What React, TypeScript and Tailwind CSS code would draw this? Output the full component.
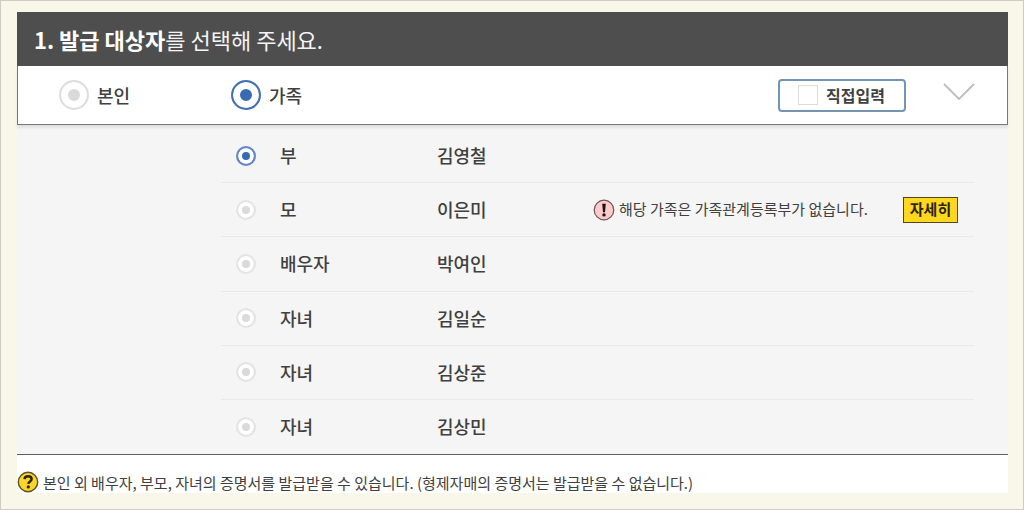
import { useState } from "react";

const family = [
  { relation: "부", name: "김영철" },
  { relation: "모", name: "이은미", missing: true },
  { relation: "배우자", name: "박여인" },
  { relation: "자녀", name: "김일순" },
  { relation: "자녀", name: "김상준" },
  { relation: "자녀", name: "김상민" },
];

function WarningIcon() {
  return (
    <svg width="22" height="22" viewBox="0 0 22 22" aria-hidden="true" className="shrink-0">
      <circle cx="11" cy="11" r="9.8" fill="#fccaca" stroke="#6b5555" strokeWidth="1.2" />
      <path d="M9.2 4.800h3.600l-.8 8.400h-2z" fill="#1d1212" />
      <circle cx="11" cy="15.900" r="1.700" fill="#1d1212" />
    </svg>
  );
}

function HelpIcon() {
  return (
    <svg width="22" height="22" viewBox="0 0 22 22" aria-hidden="true" className="shrink-0">
      <circle cx="11" cy="11" r="9.7" fill="#fbd527" stroke="#5c512a" strokeWidth="1.4" />
      <path
        d="M7.500 8.100c.2-2 1.700-2.900 3.500-2.900 2.100 0 3.600 1 3.600 2.800 0 2.400-3.200 2.400-3.200 4.900"
        fill="none"
        stroke="#2b250e"
        strokeWidth="2.500"
      />
      <circle cx="11.300" cy="15.900" r="1.600" fill="#2b250e" />
    </svg>
  );
}

export default function App() {
  const [target, setTarget] = useState("family");
  const [selected, setSelected] = useState(0);
  const [manual, setManual] = useState(false);

  return (
    <main
      className="flex min-h-screen flex-col border border-[#cfccc6] bg-[#f9f6ea] pt-[11px] pr-[15px] pb-4 pl-4 text-[#404040]"
      style={{ fontFamily: '"Noto Sans CJK KR", "Noto Sans", sans-serif' }}
    >
      {/* Header */}
      <h1 className="flex h-[54px] items-center bg-[#4e4e4e] px-[17px] text-[22px] font-normal text-[#f4f4f4]">
        <span>
          <strong className="font-bold text-white">1. 발급 대상자</strong>를 선택해 주세요.
        </span>
      </h1>

      {/* Target selection */}
      <div className="relative flex h-[59px] items-center border border-t-0 border-[#777] bg-white pr-8 pl-[41px] shadow-[0_3px_2px_#e2e2e2]">
        <label className="flex w-[172px] items-center gap-2 text-[18px] font-medium">
          <input
            type="radio"
            name="target"
            checked={target === "self"}
            onChange={() => setTarget("self")}
            className="size-[30px] shrink-0 appearance-none rounded-full border-2 border-[#dedede] bg-[#dadada] shadow-[inset_0_0_0_7px_white] checked:border-[#4470b5] checked:bg-[#396bb5]"
          />
          본인
        </label>
        <label className="flex items-center gap-2 text-[18px] font-medium">
          <input
            type="radio"
            name="target"
            checked={target === "family"}
            onChange={() => setTarget("family")}
            className="size-[30px] shrink-0 appearance-none rounded-full border-2 border-[#dedede] bg-[#dadada] shadow-[inset_0_0_0_7px_white] checked:border-[#4470b5] checked:bg-[#396bb5]"
          />
          가족
        </label>
        <label className="ml-auto flex h-[33px] w-32 items-center gap-2 rounded border-2 border-[#7394b3] pl-[18px] text-[16px] font-bold whitespace-nowrap">
          <input
            type="checkbox"
            checked={manual}
            onChange={(e) => setManual(e.target.checked)}
            className="size-5 shrink-0 appearance-none border border-[#dcdcdc] bg-white checked:bg-[#396bb5]"
          />
          직접입력
        </label>
        <button type="button" aria-label="접기" className="ml-[37px] pb-2">
          <svg width="32" height="17" viewBox="0 0 32 17" fill="none" stroke="#bdbdbd" strokeWidth="1.8">
            <path d="M1 1l15 15L31 1" />
          </svg>
        </button>
      </div>

      {/* Family list */}
      <div className="flex flex-1 flex-col border-b border-[#5e5e5e] bg-[#f5f5f5] pt-1 pr-[34px] pl-[204px]">
        <ul className="grid flex-1 auto-rows-fr divide-y divide-[#e9e9e9]">
          {family.map((member, i) => (
            <li key={i} className="flex items-center pr-4 pl-[15px]">
              <label className="flex items-center text-[18px] font-medium">
                <input
                  type="radio"
                  name="member"
                  checked={selected === i}
                  onChange={() => setSelected(i)}
                  className="mr-6 size-5 shrink-0 appearance-none rounded-full border-2 border-[#e4e4e4] bg-[#dadada] shadow-[inset_0_0_0_4px_white] checked:border-[#6488c4] checked:bg-[#396bb5]"
                />
                <span className="w-[157px]">{member.relation}</span>
                <span className="w-[156px]">{member.name}</span>
              </label>
              {member.missing && (
                <>
                  <p className="flex items-center gap-1 text-[15px] whitespace-nowrap">
                    <WarningIcon />
                    해당 가족은 가족관계등록부가 없습니다.
                  </p>
                  <button
                    type="button"
                    className="ml-auto flex h-[26px] w-[55px] items-center justify-center border border-[#4f481f] bg-[#ffd71f] text-[15px] font-bold whitespace-nowrap text-[#2b250e]"
                  >
                    자세히
                  </button>
                </>
              )}
            </li>
          ))}
        </ul>
      </div>

      {/* Notice */}
      <p className="flex items-end gap-1 bg-white pt-4 text-[15px] leading-[21px]">
        <HelpIcon />
        본인 외 배우자, 부모, 자녀의 증명서를 발급받을 수 있습니다. (형제자매의 증명서는 발급받을 수 없습니다.)
      </p>
    </main>
  );
}
